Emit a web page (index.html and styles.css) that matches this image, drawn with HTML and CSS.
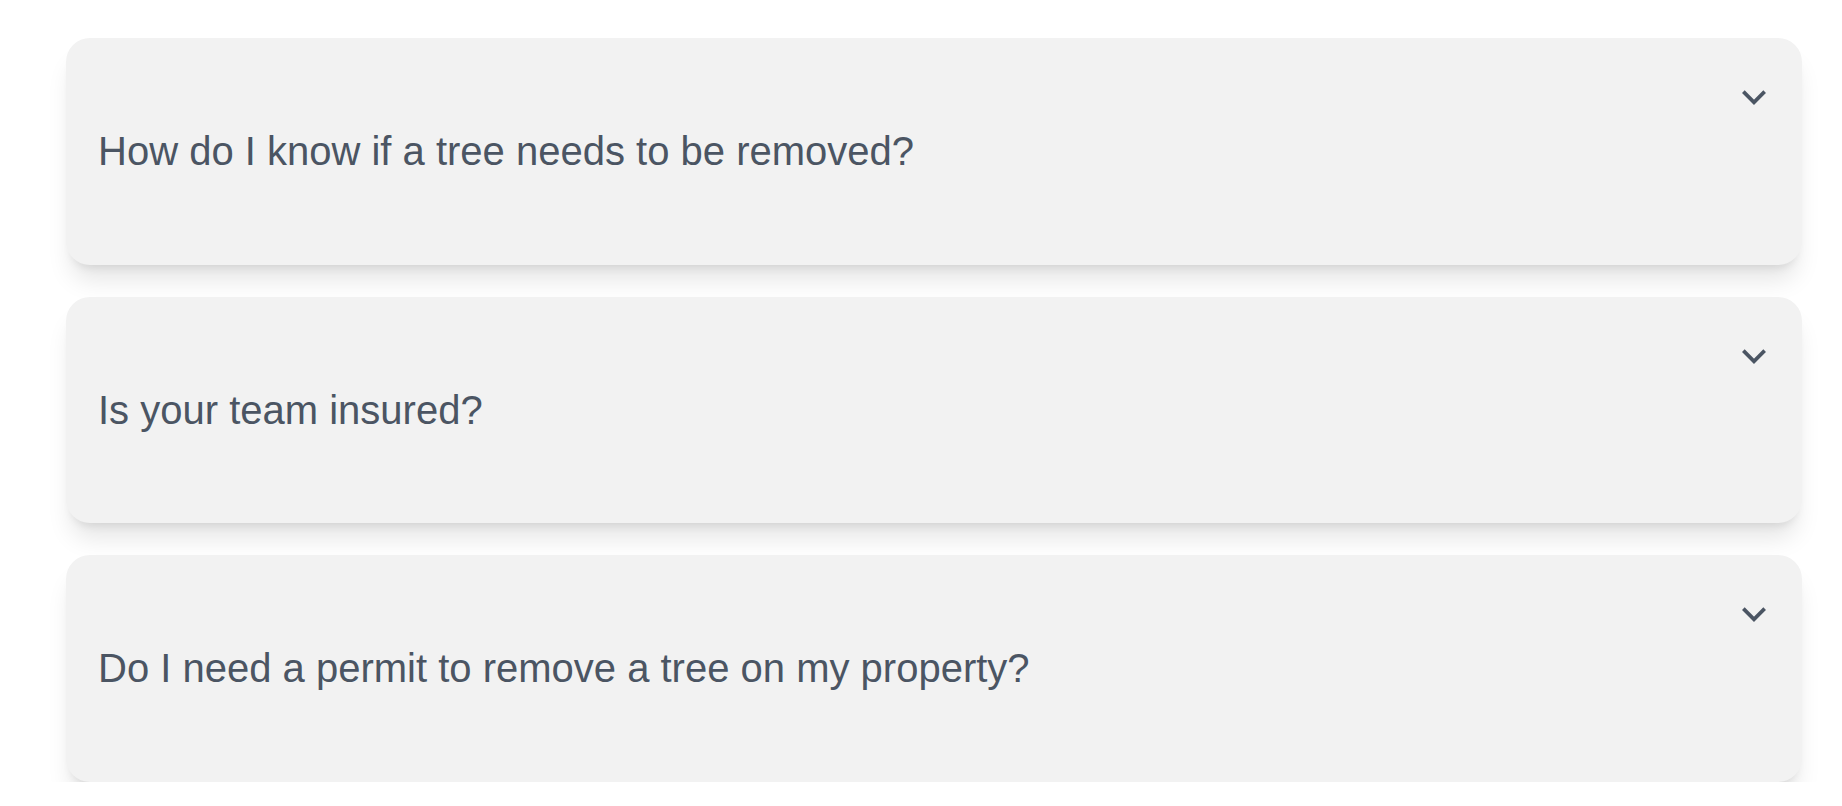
FILE: index.html
```html
<!DOCTYPE html>
<html lang="en">
<head>
<meta charset="utf-8">
<title>FAQ</title>
<link rel="stylesheet" href="styles.css">
</head>
<body>
<div class="faq">
  <div class="item">
    <span class="question">How do I know if a tree needs to be removed?</span>
    <svg class="chev" viewBox="0 0 24 24" fill="none" stroke="currentColor" stroke-width="2.8" stroke-linecap="square" stroke-linejoin="miter"><path d="M19 9l-7 7-7-7"/></svg>
  </div>
  <div class="item">
    <span class="question">Is your team insured?</span>
    <svg class="chev" viewBox="0 0 24 24" fill="none" stroke="currentColor" stroke-width="2.8" stroke-linecap="square" stroke-linejoin="miter"><path d="M19 9l-7 7-7-7"/></svg>
  </div>
  <div class="item">
    <span class="question">Do I need a permit to remove a tree on my property?</span>
    <svg class="chev" viewBox="0 0 24 24" fill="none" stroke="currentColor" stroke-width="2.8" stroke-linecap="square" stroke-linejoin="miter"><path d="M19 9l-7 7-7-7"/></svg>
  </div>
</div>
</body>
</html>
```
FILE: styles.css
```css
html, body {
  margin: 0;
  padding: 0;
  background: #ffffff;
}
body {
  font-family: "Liberation Sans", Arial, sans-serif;
  color: #4b5563;
}
.faq {
  display: flex;
  flex-direction: column;
  gap: 32px;
  padding: 38px 40px 0 66px;
}
.item {
  display: flex;
  justify-content: space-between;
  align-items: center;
  background: #f2f2f2;
  border-radius: 24px;
  padding: 43.25px 32px;
  box-shadow: 0 20px 25px -5px rgba(0,0,0,0.1), 0 8px 10px -6px rgba(0,0,0,0.1);
}
.question {
  font-size: 40px;
  line-height: 140px;
}
.chev {
  align-self: flex-start;
  width: 32px;
  height: 32px;
  flex: none;
}
```
